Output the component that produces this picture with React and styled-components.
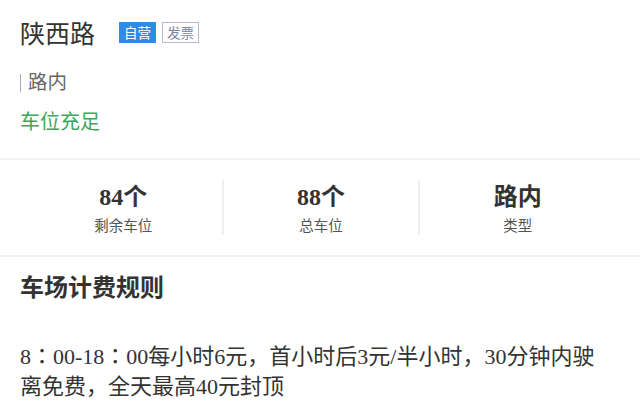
import styled, { createGlobalStyle } from "styled-components";

const GlobalStyle = createGlobalStyle`
  body {
    margin: 0;
    background: #fff;
    font-family: "Liberation Serif", "Noto Sans CJK SC", serif;
    color: #333;
  }
`;

const stats = [
  { value: "84个", label: "剩余车位" },
  { value: "88个", label: "总车位" },
  { value: "路内", label: "类型" },
];

const App = () => {
  return (
    <Page>
      <GlobalStyle />
      <Header>
        <TitleRow>
          <Title>陕西路</Title>
          <Badge $filled>自营</Badge>
          <Badge>发票</Badge>
        </TitleRow>
        <Kind>路内</Kind>
        <Status>车位充足</Status>
      </Header>
      <Stats>
        {stats.map((s) => (
          <Stat key={s.label}>
            <StatValue>{s.value}</StatValue>
            <StatLabel>{s.label}</StatLabel>
          </Stat>
        ))}
      </Stats>
      <Rules>
        <RulesTitle>车场计费规则</RulesTitle>
        <RulesText>
          8<Colon>：</Colon>00-18<Colon>：</Colon>00每小时6元，首小时后3元/半小时，30分钟内驶离免费，全天最高40元封顶
        </RulesText>
      </Rules>
    </Page>
  );
};

//Styled components
const Page = styled.div`
  width: 640px;
  height: 418px;
  overflow: hidden;
`;

const Header = styled.div`
  padding: 16px 20px 24px;
  border-bottom: 2px solid #f2f2f2;
`;

const TitleRow = styled.div`
  display: flex;
  align-items: center;
  height: 32px;
`;

const Title = styled.h1`
  margin: 0 24px 0 0;
  font-family: "Noto Sans CJK SC", sans-serif;
  font-size: 25px;
  font-weight: normal;
  color: #333;
`;

const Badge = styled.span`
  box-sizing: border-box;
  height: 21px;
  padding: 0 4px;
  margin-right: 6px;
  display: flex;
  align-items: center;
  font-family: "Noto Sans CJK SC", sans-serif;
  font-size: 13.5px;
  background: ${(p) => (p.$filled ? "#2f8be6" : "#fff")};
  color: ${(p) => (p.$filled ? "#fff" : "#7886a4")};
  border: 1px solid ${(p) => (p.$filled ? "#2f8be6" : "#b4bccb")};
`;

const Kind = styled.div`
  margin-top: 20px;
  display: flex;
  align-items: center;
  font-family: "Noto Sans CJK SC", sans-serif;
  font-size: 19.5px;
  color: #666;
  line-height: 26px;
  &::before {
    content: "";
    width: 1px;
    height: 18px;
    margin-top: 3px;
    background: #aaa;
    margin-right: 7px;
  }
`;

const Status = styled.div`
  margin-top: 14px;
  font-family: "Noto Sans CJK SC", sans-serif;
  font-size: 20px;
  color: #3ea55a;
  line-height: 26px;
`;

const Stats = styled.div`
  display: grid;
  grid-template-columns: repeat(3, 1fr);
  padding: 20px 25px;
  border-bottom: 2px solid #f2f2f2;
`;

const Stat = styled.div`
  display: flex;
  flex-direction: column;
  align-items: center;
  gap: 4px;
  padding-top: 3px;
  & + & {
    border-left: 2px solid #eee;
  }
`;

const StatValue = styled.div`
  font-size: 24px;
  font-weight: bold;
  color: #333;
  line-height: 28px;
`;

const StatLabel = styled.div`
  font-family: "Noto Sans CJK SC", sans-serif;
  font-size: 14.5px;
  color: #555;
  line-height: 20px;
`;

const Rules = styled.div`
  padding: 14px 30px 0 20px;
`;

const RulesTitle = styled.h2`
  margin: 0 0 38px;
  font-family: "Noto Sans CJK SC", sans-serif;
  font-size: 24px;
  font-weight: bold;
  color: #333;
  line-height: 30px;
`;

const RulesText = styled.p`
  margin: 0;
  font-size: 22px;
  line-height: 30px;
  color: #333;
`;

const Colon = styled.span`
  font-family: "Noto Sans CJK TC", sans-serif;
`;

export default App;
